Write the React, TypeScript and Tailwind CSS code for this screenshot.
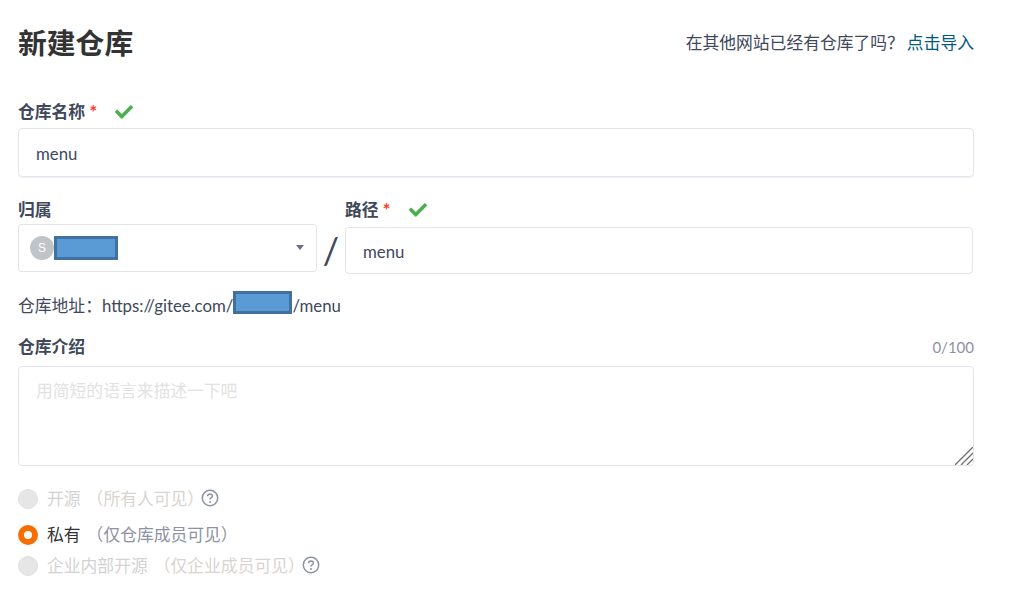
import { FaCheck } from "react-icons/fa";

const font = { fontFamily: '"Lato", "Noto Sans CJK SC", sans-serif' };

function Help() {
  return (
    <svg width="18" height="18" viewBox="0 0 18 18" fill="none" className="ml-[-3px] mb-[3px]">
      <circle cx="9" cy="9" r="7.7" stroke="#8c92a4" strokeWidth="1.5" />
      <path d="M6.6 7.2c0-1.4 1-2.3 2.4-2.3s2.4.9 2.4 2.1c0 1.9-2.4 1.9-2.4 3.6" stroke="#8c92a4" strokeWidth="1.5" />
      <circle cx="9" cy="12.9" r="1" fill="#8c92a4" />
    </svg>
  );
}

function Redacted({ className }: { className: string }) {
  return <span className={"block border-[3px] border-[#41719c] bg-[#5b9bd5] " + className} />;
}

function Radio({ label, note, checked, help, className }: { label: string; note: string; checked?: boolean; help?: boolean; className: string }) {
  return (
    <div className={"flex items-center text-[16.8px] " + className}>
      {checked ? (
        <span className="w-5 h-5 rounded-full border-[6px] border-[#f76d00] bg-white" />
      ) : (
        <span className="w-5 h-5 rounded-full bg-[#e6e6e6] border border-[#e0e0e0]" />
      )}
      <span className={"ml-[9px] " + (checked ? "text-[#333333]" : "text-[#d2d2d2]")}>{label}</span>
      <span className={"ml-[6px] " + (checked ? "text-[#8c92a4]" : "text-[#d8d4d0]")}>（{note}）</span>
      {help && <Help />}
    </div>
  );
}

export default function App() {
  return (
    <div className="w-[1015px] h-[595px] overflow-hidden bg-white pl-[18px] pt-[24px]" style={font}>
      <div className="w-[956px]">
        <div className="flex items-center justify-between h-[38px]">
          <h1 className="pt-[2px] text-[28.8px] font-bold text-[#333333]">新建仓库</h1>
          <div className="text-[16.8px] text-[#40485b]">
            在其他网站已经有仓库了吗？
            <a className="ml-[3px] text-[#005980]">点击导入</a>
          </div>
        </div>

        <div className="flex items-center h-[22px] mt-[39px] text-[16.8px] font-bold text-[#40485b]">
          仓库名称<span className="ml-[4px] text-[#ff3b30] text-[19px] font-bold">*</span>
          <FaCheck className="ml-[18px] text-[#4caf50]" size={18} />
        </div>
        <div className="flex items-center h-[49px] mt-[5px] px-[17px] pt-[2px] border border-[#e3e4ec] rounded-[4px] shadow-[0_1px_1px_#eeeef4] text-[16.8px] text-[#40485b]">
          menu
        </div>

        <div className="flex mt-[21px]">
          <div className="w-[299px]">
            <div className="h-[26px] text-[16.8px] font-bold text-[#40485b] leading-[24px]">归属</div>
            <div className="flex items-center h-[48px] pl-[11px] pr-[12px] border border-[#e3e4ec] rounded-[3px]">
              <span className="flex items-center justify-center w-6 h-6 rounded-full bg-[#bfc4c9] text-white text-[12px] font-['Liberation_Sans']">S</span>
              <Redacted className="w-[64px] h-[24px] mb-[1px]" />
              <span className="ml-auto mt-[-2px] border-x-[4px] border-t-[5px] border-x-transparent border-t-[#6c7080]" />
            </div>
          </div>
          <div className="w-[28px] h-[76px] pt-[25px] text-center text-[36px] leading-[54px] text-[#40485b]">/</div>
          <div className="w-[628px]">
            <div className="flex items-center h-[24px] text-[16.8px] font-bold text-[#40485b]">
              路径<span className="ml-[4px] text-[#ff3b30] text-[19px] font-bold">*</span>
              <FaCheck className="ml-[18px] text-[#4caf50]" size={18} />
            </div>
            <div className="flex items-center h-[47px] mt-[5px] px-[17px] pt-[3px] border border-[#e3e4ec] rounded-[4px] text-[16.8px] text-[#40485b]">
              menu
            </div>
          </div>
        </div>

        <div className="flex items-center h-[24px] mt-[20px] text-[16.8px] text-[#40485b]">
          仓库地址：https://gitee.com/
          <Redacted className="w-[59px] h-[23px] mb-[8px]" />
          /menu
        </div>

        <div className="flex items-center justify-between h-[24px] mt-[17px]">
          <span className="text-[16.8px] font-bold text-[#40485b]">仓库介绍</span>
          <span className="text-[15px] text-[#8c92a4]">0/100</span>
        </div>
        <div className="relative mt-[7px]">
          <textarea
            readOnly
            placeholder="用简短的语言来描述一下吧"
            className="block w-full h-[100px] px-[17px] py-[11px] border border-[#e3e4ec] rounded-[4px] text-[16.8px] outline-none resize-none placeholder:text-[#e2e2e2]"
          />
          <svg width="18" height="18" viewBox="0 0 18 18" className="absolute right-[1px] bottom-[1px]" stroke="#6e6e6e" strokeWidth="1.3">
            <path d="M0 18 18 0M6 18 18 6M12 18 18 12" />
          </svg>
        </div>

        <Radio label="开源" note="所有人可见" help className="h-[24px] mt-[21px]" />
        <Radio label="私有" note="仅仓库成员可见" checked className="h-[24px] mt-[12px]" />
        <Radio label="企业内部开源" note="仅企业成员可见" help className="h-[24px] mt-[7px]" />
      </div>
    </div>
  );
}
